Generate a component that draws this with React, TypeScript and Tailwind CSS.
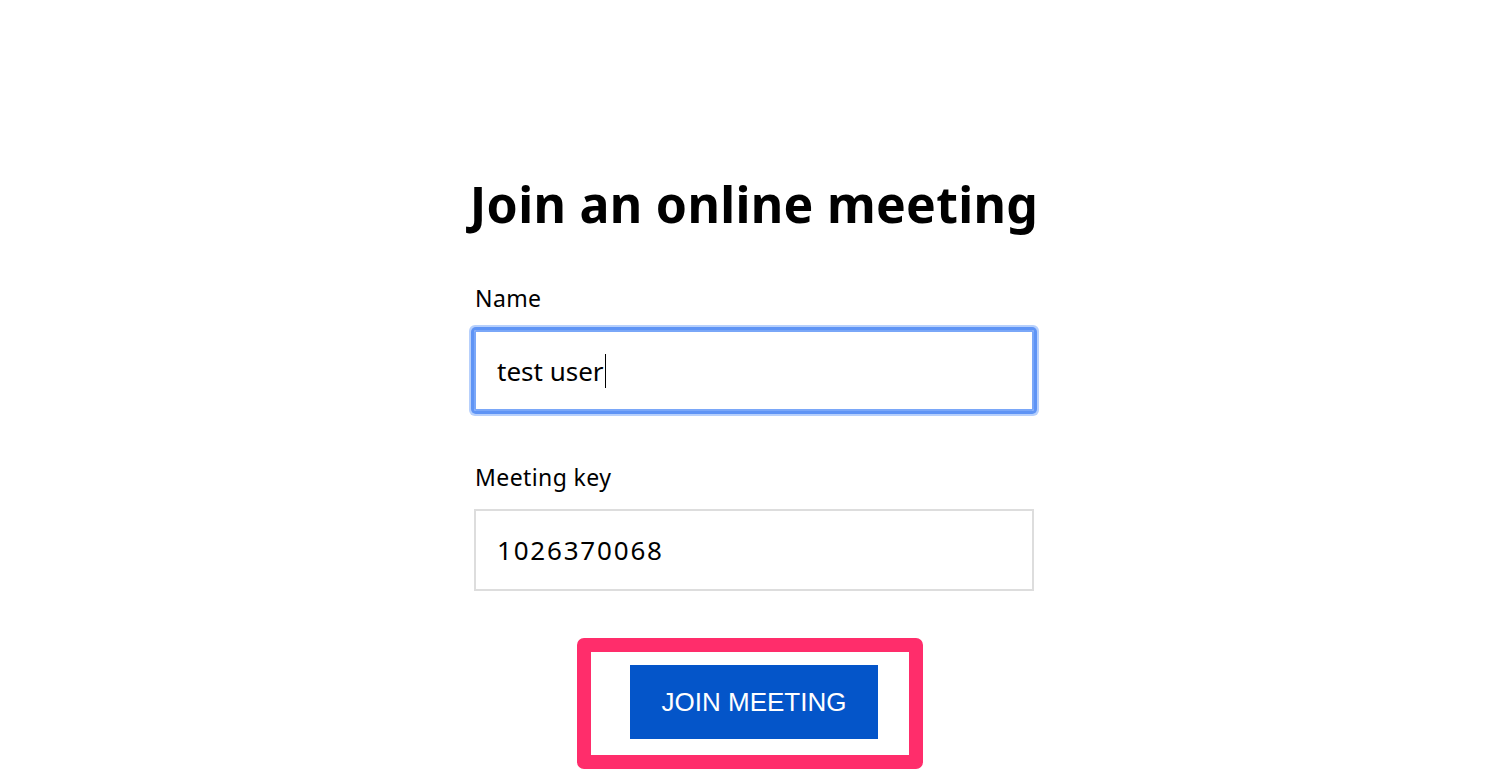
import { useState } from "react";

const font = { fontFamily: '"Noto Sans", "Open Sans", sans-serif' };

export default function App() {
  const [name, setName] = useState("test user");
  const [key, setKey] = useState("1026370068");

  return (
    <div className="min-h-[770px] bg-white pl-4 flex justify-center" style={font}>
      <div className="w-[560px] pt-[166px] flex flex-col">
        <h1 className="text-center text-[50px] leading-[76px] font-bold text-black -mx-4 tracking-[0.3px]">
          Join an online meeting
        </h1>

        <label className="mt-[41px] text-[23px] leading-[30px] text-black pl-px tracking-[0.4px]">Name</label>
        <div className="relative mt-[17px]">
          <input
            value={name}
            onChange={(e) => setName(e.target.value)}
            className="h-[81px] w-full border-2 border-[#7aa7f8] px-[21px] text-[26px] text-black outline-none rounded-[2px] caret-transparent shadow-[0_0_0_3px_#5f94f5,0_0_0_5px_#b7d0fc]"
          />
          {/* caret drawn so it doesn't blink away */}
          <span className="absolute left-[131px] top-[24px] h-[34px] w-px bg-black" />
        </div>

        <label className="mt-[51px] text-[23px] leading-[30px] text-black pl-px tracking-[0.4px]">Meeting key</label>
        <input
          value={key}
          onChange={(e) => setKey(e.target.value)}
          className="mt-[17px] h-[82px] w-full border-2 border-[#dddddd] px-[21px] text-[26px] tracking-[1.8px] text-black outline-none"
        />

        <div className="mt-[47px] self-center -translate-x-1 rounded-[7px] border-[14px] border-[#ff2d6b] pl-[39px] pr-[31px] pt-[13px] pb-[16px]">
          <button
            className="w-[248px] h-[74px] bg-[#0455c9] text-white text-[26px]"
            style={{ fontFamily: '"Liberation Sans", Arial, sans-serif' }}
          >
            JOIN MEETING
          </button>
        </div>
      </div>
    </div>
  );
}
